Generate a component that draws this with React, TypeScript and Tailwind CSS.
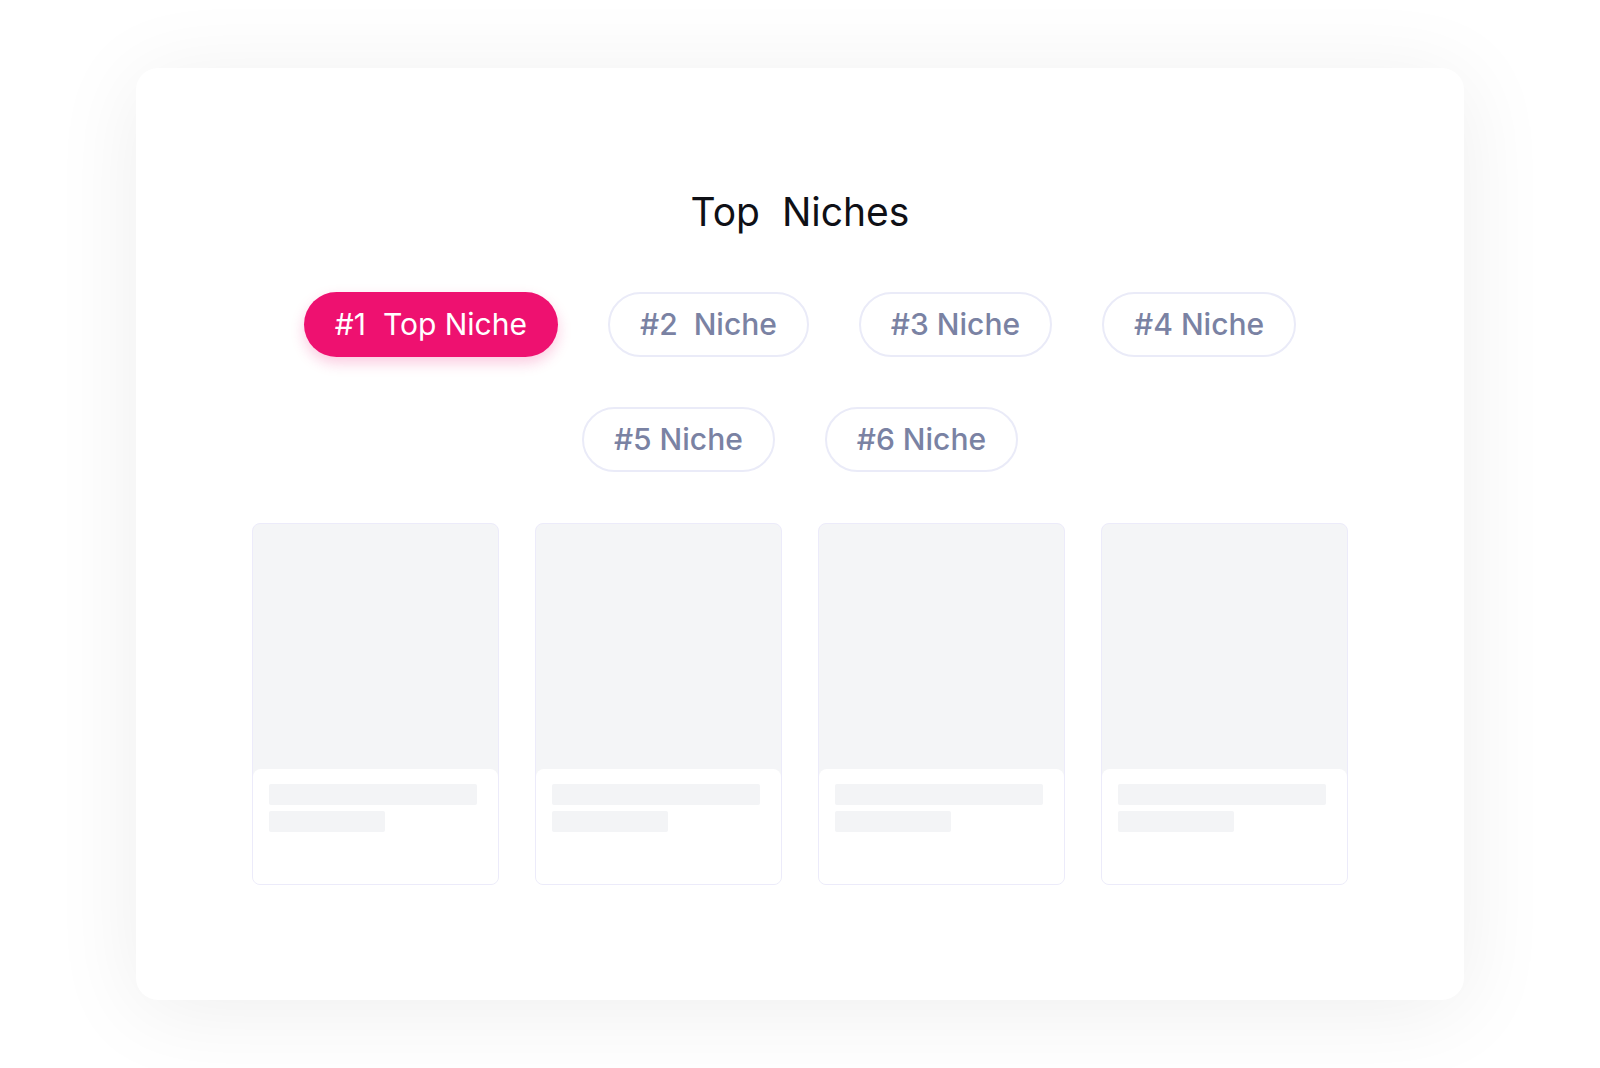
import React from "react";

const font = { fontFamily: "Inter, 'Open Sans', sans-serif" };

function Pill({ label, active }: { label: string; active?: boolean }) {
  if (active) {
    return (
      <div className="h-[65px] px-[31px] rounded-full bg-[#ee1170] text-white flex items-center justify-center text-[30px] whitespace-pre shadow-[0_6px_14px_rgba(238,17,112,0.22)]">
        {label}
      </div>
    );
  }
  return (
    <div className="h-[65px] px-[30px] rounded-full border-2 border-[#eaebf8] bg-white text-[#7a82a3] flex items-center justify-center text-[30px] font-medium whitespace-pre">
      {label}
    </div>
  );
}

function Card() {
  return (
    <div className="w-[247px] h-[362px] rounded-[8px] border border-[#ecebfa] bg-[#f4f5f7] flex flex-col overflow-hidden">
      <div className="flex-1" />
      <div className="h-[115px] bg-white rounded-t-[8px] px-[16px] pt-[15px] flex flex-col gap-[6px]">
        <div className="h-[21px] w-[208px] bg-[#f3f4f6] rounded-[2px]" />
        <div className="h-[21px] w-[116px] bg-[#f3f4f6] rounded-[2px]" />
      </div>
    </div>
  );
}

export default function App() {
  return (
    <div className="w-[1600px] h-[1068px] bg-white pt-[68px] pl-[136px]" style={font}>
      <div className="w-[1328px] h-[932px] bg-white rounded-[22px] shadow-[0_10px_90px_rgba(0,0,0,0.07)] flex flex-col items-center">
        <div className="mt-[120px] text-[39px] leading-[48px] text-[#0f1016] whitespace-pre">Top  Niches</div>
        <div className="mt-[56px] flex gap-[50px]">
          <Pill label="#1  Top Niche" active />
          <Pill label="#2  Niche" />
          <Pill label="#3 Niche" />
          <Pill label="#4 Niche" />
        </div>
        <div className="mt-[50px] flex gap-[50px]">
          <Pill label="#5 Niche" />
          <Pill label="#6 Niche" />
        </div>
        <div className="mt-[51px] flex gap-[36px]">
          <Card />
          <Card />
          <Card />
          <Card />
        </div>
      </div>
    </div>
  );
}
